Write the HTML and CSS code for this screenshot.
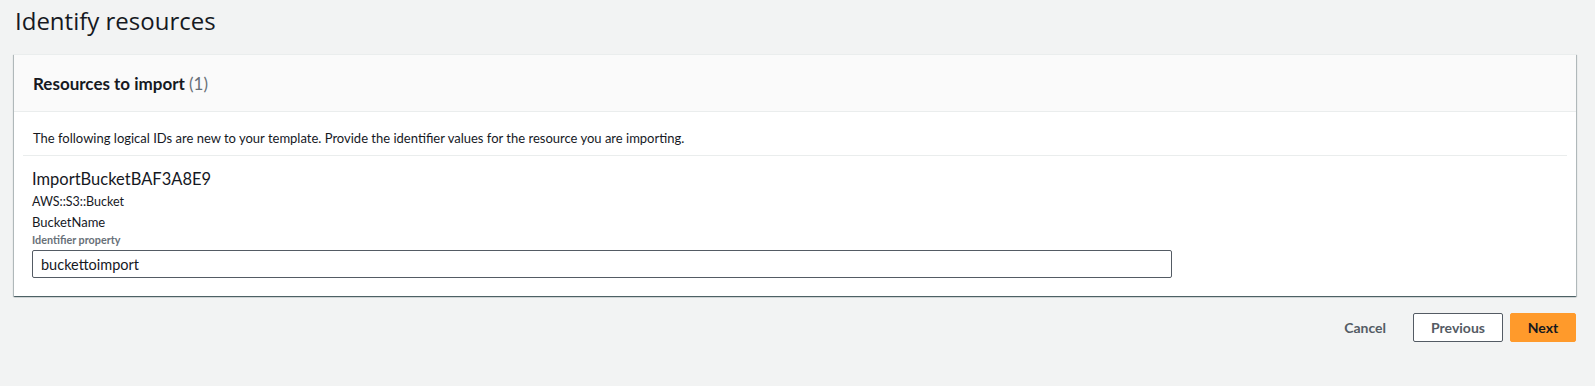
FILE: index.html
```html
<!DOCTYPE html>
<html lang="en">
<head>
  <meta charset="UTF-8">
  <meta name="viewport" content="width=device-width, initial-scale=1.0">
  <title>Identify resources</title>
  <link rel="stylesheet" href="styles.css">
</head>
<body>

<h1 class="page-title">Identify resources</h1>

<div class="card">
  <div class="card-header">
    <h2>Resources to import <span class="count">(1)</span></h2>
  </div>
  <div class="card-body">
    <p class="intro">The following logical IDs are new to your template. Provide the identifier values for the resource you are importing.</p>
    <div class="resource">
      <div class="logical-id">ImportBucketBAF3A8E9</div>
      <div class="res-type">AWS::S3::Bucket</div>
      <label class="field-label" for="bucketName">BucketName</label>
      <div class="field-desc">Identifier property</div>
      <input class="field-input" id="bucketName" type="text" value="buckettoimport">
    </div>
  </div>
</div>

<div class="actions">
  <button type="button" class="btn-link">Cancel</button>
  <button type="button" class="btn-normal">Previous</button>
  <button type="button" class="btn-primary">Next</button>
</div>

</body>
</html>
```

FILE: styles.css
```css
body { margin: 0; padding: 0 19px 0 14px; background: #f2f3f3; color: #16191f; font-family: Lato, "Open Sans", Arial, sans-serif; }
.page-title { font-family: "Open Sans", Arial, sans-serif; font-size: 24px; font-weight: 400; line-height: 30px; margin: 6px 0 0 1px; height: 48px; }

.card { background: #fff; border-top: 1px solid #eaeded; box-shadow: 0 1px 1px 0 rgba(0,28,36,.5), 1px 1px 1px 0 rgba(0,28,36,.2), -1px 1px 1px 0 rgba(0,28,36,.2); }
.card-header { background: #fafafa; border-bottom: 1px solid #eaeded; padding: 0 19px; height: 56px; display: flex; align-items: center; }
.card-header h2 { font-size: 17px; font-weight: 700; margin: 0; }
.card-header .count { color: #687078; font-weight: 400; }

.card-body { padding: 0 9px 18px 9px; }
.intro { font-size: 13px; line-height: 20px; margin: 0; padding: 16px 10px 7px; border-bottom: 1px solid #eaeded; }
.resource { padding: 12px 9px 0; }
.logical-id { font-size: 16.5px; line-height: 22px; margin-bottom: 2px; }
.res-type { font-size: 12.5px; line-height: 20px; }
.field-label { display: block; font-size: 13px; line-height: 20px; }
.field-desc { font-size: 10.8px; font-weight: 700; line-height: 16px; color: #687078; }
.field-input { display: block; box-sizing: border-box; width: 1140px; height: 28px; margin-top: 2px; padding: 0 8px; border: 1px solid #545b64; border-radius: 2px; font-family: Lato, "Open Sans", Arial, sans-serif; font-size: 14.5px; color: #16191f; }

.actions { display: flex; justify-content: flex-end; align-items: center; gap: 7px; padding-top: 17px; }
.actions button { font-family: inherit; font-size: 14px; font-weight: 700; height: 29px; border-radius: 2px; cursor: pointer; }
.btn-link { background: none; border: none; color: #545b64; padding: 0 20px; }
.btn-normal { background: #fff; border: 1px solid #545b64; color: #545b64; width: 90px; }
.btn-primary { background: #ff9a2b; border: 1px solid #ff9a2b; color: #16191f; width: 66px; }
```
